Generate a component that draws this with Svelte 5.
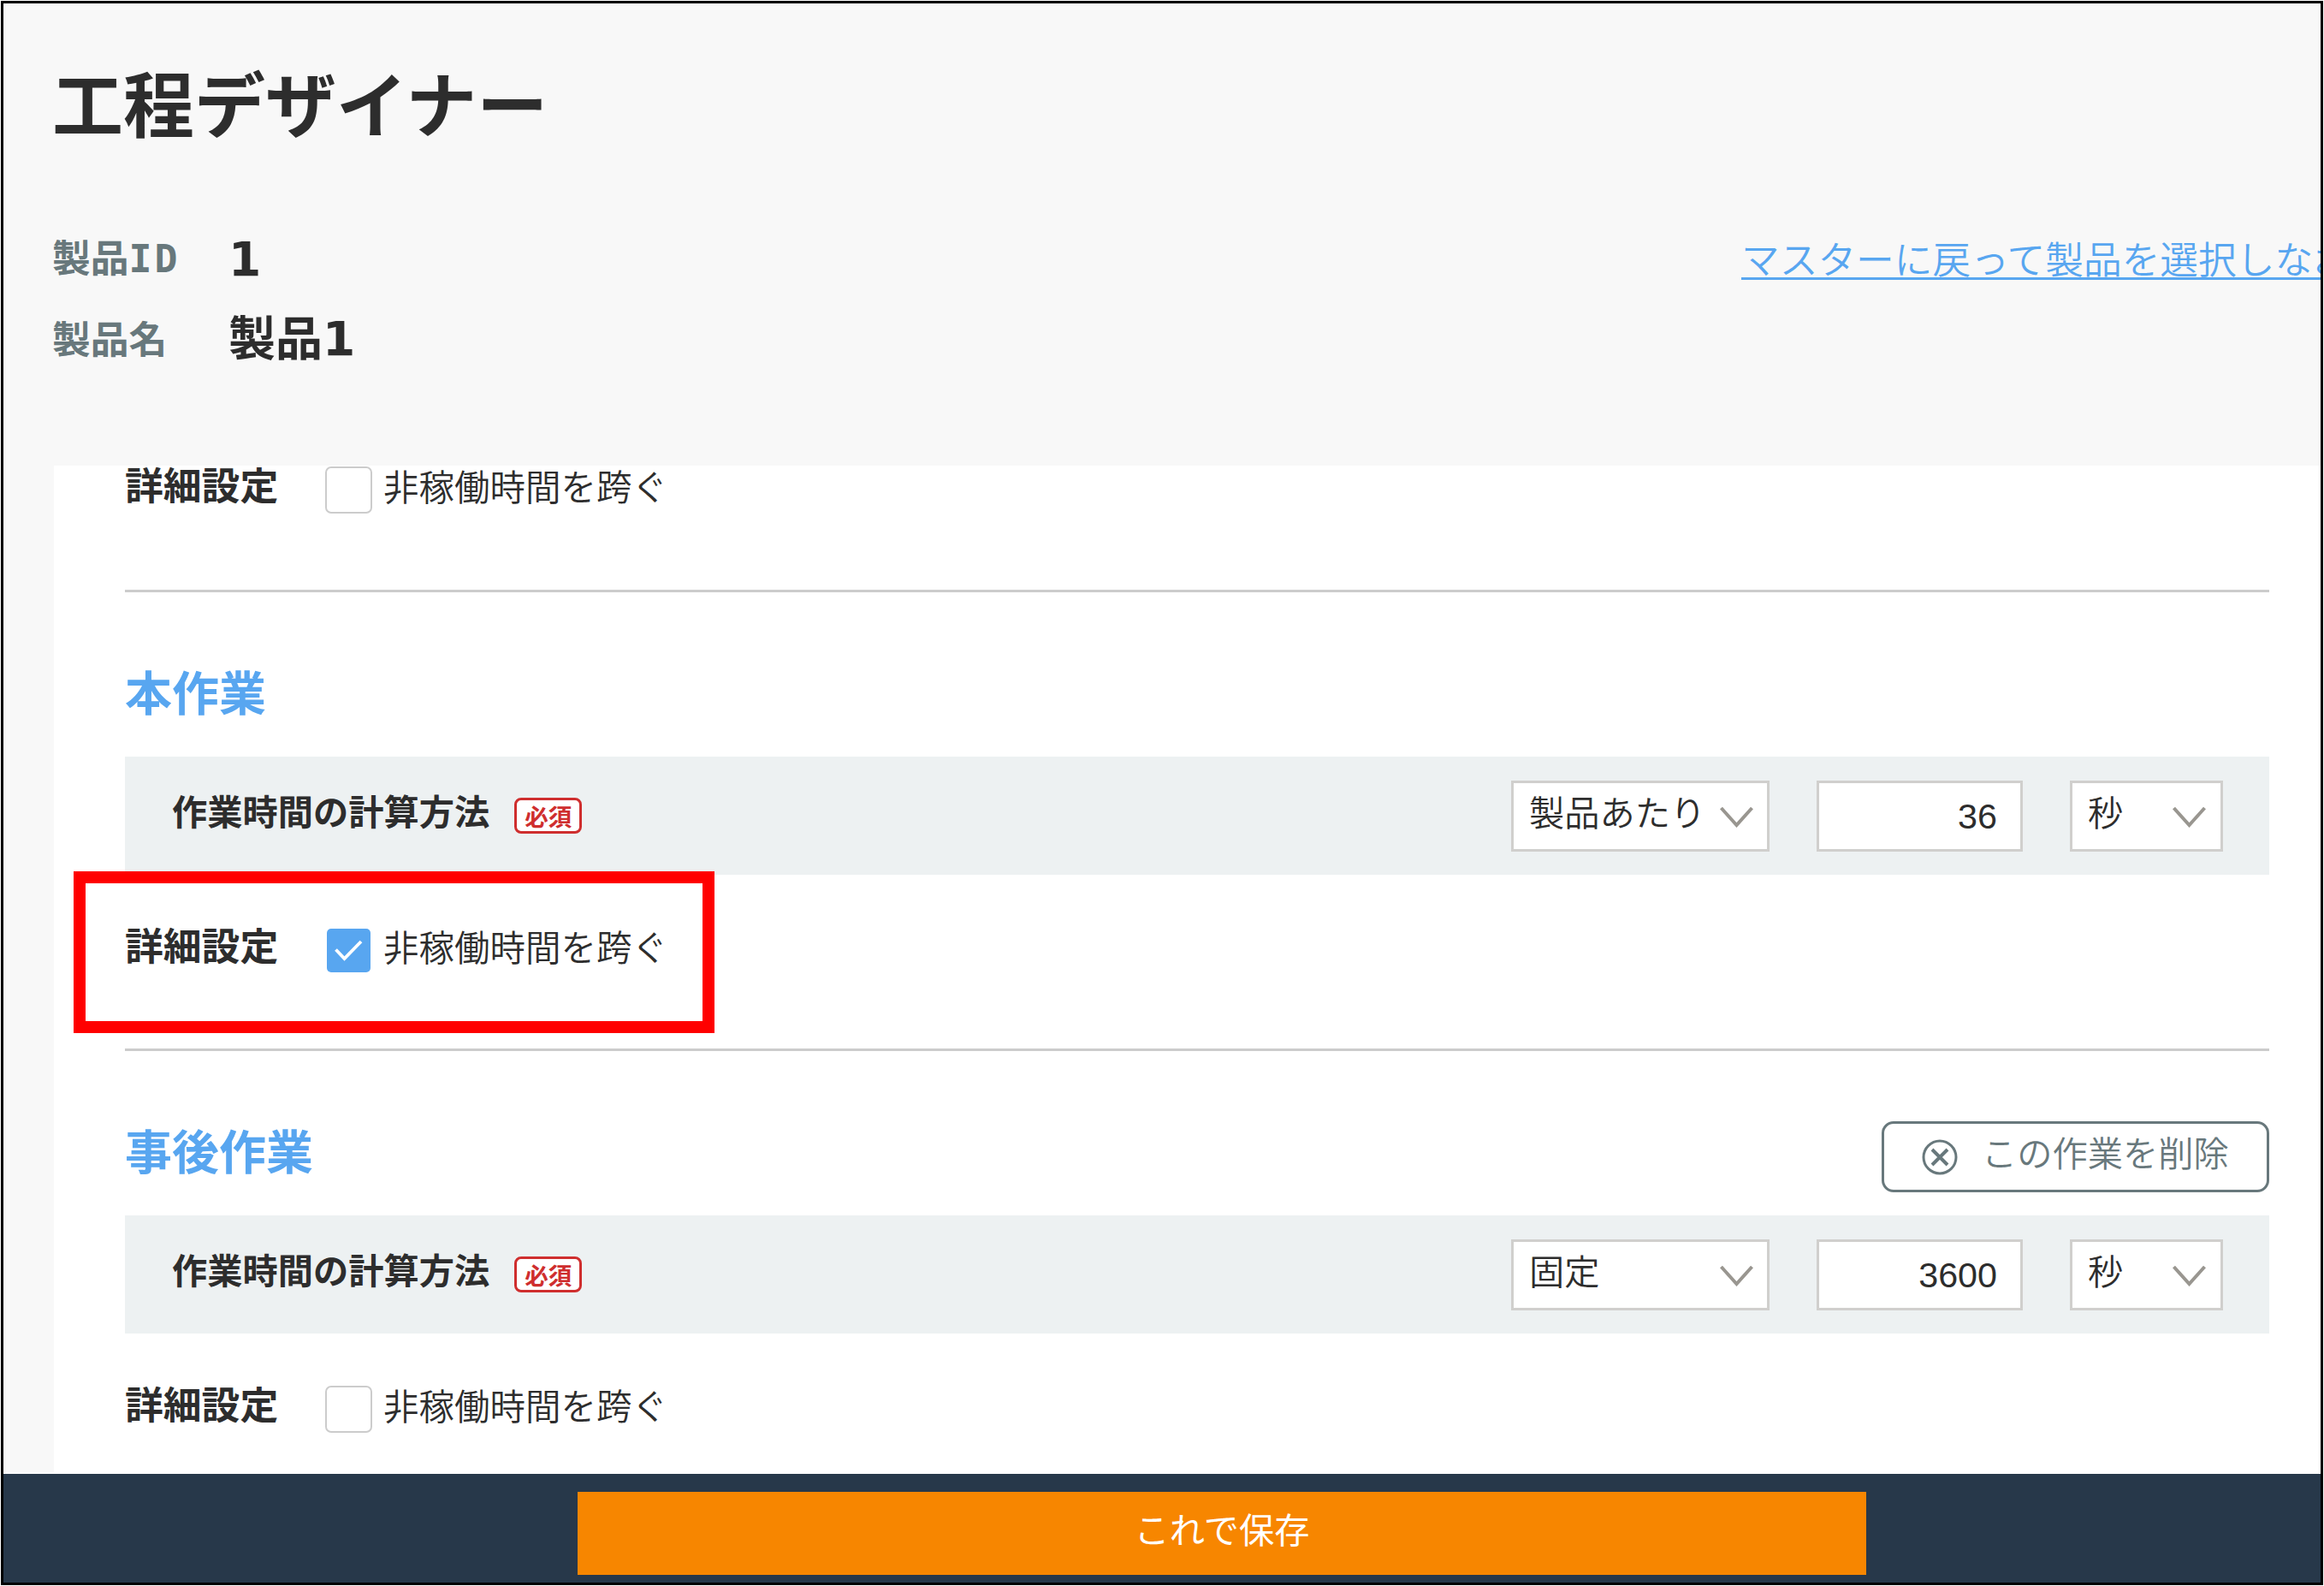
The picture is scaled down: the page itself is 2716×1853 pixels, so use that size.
<script>
	let tasks = $state([
		{ name: '本作業', method: '製品あたり', time: '36', unit: '秒', overIdle: true, marked: true, removable: false },
		{ name: '事後作業', method: '固定', time: '3600', unit: '秒', overIdle: false, marked: false, removable: true }
	]);
	let preOverIdle = $state(false);
</script>

{#snippet chevron()}
	<svg class="chevron" viewBox="0 0 39 26" fill="none" stroke="currentColor" stroke-width="4">
		<path d="M1.5 2 L19.5 22 L37.5 2"></path>
	</svg>
{/snippet}

{#snippet detail(checked, marked, toggle)}
	<div class="detail">
		<span class="detail-title">詳細設定</span>
		<button class="checkbox" class:checked aria-label="非稼働時間を跨ぐ" onclick={toggle}>
			{#if checked}
				<svg viewBox="0 0 51 51" fill="none" stroke="#fff" stroke-width="3.8">
					<path d="M10.5 24.5 L20.5 35 L40 15"></path>
				</svg>
			{/if}
		</button>
		<span class="detail-label">非稼働時間を跨ぐ</span>
		{#if marked}
			<div class="marker"></div>
		{/if}
	</div>
{/snippet}

<div class="frame">
	<header>
		<h1>工程デザイナー</h1>
		<div class="product">
			<dl>
				<div class="info">
					<dt>製品<span class="latin">ID</span></dt>
					<dd><span class="digit">1</span></dd>
				</div>
				<div class="info">
					<dt>製品名</dt>
					<dd>製品<span class="digit">1</span></dd>
				</div>
			</dl>
			<a class="back" href="#master">マスターに戻って製品を選択しなおす</a>
		</div>
	</header>

	<main>
		<div class="panel">
			<section>
				{@render detail(preOverIdle, false, () => (preOverIdle = !preOverIdle))}
			</section>
			{#each tasks as task}
				<section>
					<div class="section-head">
						<h2>{task.name}</h2>
						{#if task.removable}
							<button class="delete">
								<svg viewBox="0 0 42 42" fill="none" stroke="currentColor">
									<circle cx="21" cy="21" r="19" stroke-width="3"></circle>
									<path d="M12 12 L30 30 M30 12 L12 30" stroke-width="4"></path>
								</svg>
								<span>この作業を削除</span>
							</button>
						{/if}
					</div>
					<div class="calc">
						<span class="calc-title">作業時間の計算方法</span>
						<span class="required">必須</span>
						<div class="fields">
							<div class="field method">
								<span>{task.method}</span>
								{@render chevron()}
							</div>
							<div class="field time">{task.time}</div>
							<div class="field unit">
								<span>{task.unit}</span>
								{@render chevron()}
							</div>
						</div>
					</div>
					{@render detail(task.overIdle, task.marked, () => (task.overIdle = !task.overIdle))}
				</section>
			{/each}
		</div>
	</main>

	<footer>
		<button class="save">これで保存</button>
	</footer>
</div>

<style>
	:global(body) {
		margin: 0;
		background: #fff;
	}

	.frame {
		display: flex;
		flex-direction: column;
		box-sizing: border-box;
		width: 2714px;
		height: 1851px;
		margin: 1px;
		border: 3px solid #000;
		background: #f8f8f8;
		overflow: hidden;
		color: #2d2d2d;
		font-family: 'Noto Sans CJK JP', sans-serif;
		font-size: 41.25px;
	}

	button {
		padding: 0;
		font: inherit;
		cursor: pointer;
	}

	/* Header */
	header {
		flex: none;
		box-sizing: border-box;
		height: 540px;
		padding: 54px 0 0 57px;
	}

	h1 {
		margin: 0 0 76px;
		font-size: 83px;
		font-weight: 700;
		line-height: 120px;
	}

	.product {
		display: flex;
		justify-content: space-between;
	}

	dl {
		margin: 0;
	}

	.info {
		display: flex;
		align-items: center;
		height: 93px;
	}

	dt {
		width: 206px;
		color: #68787c;
		font-size: 44.8px;
		font-weight: 700;
		line-height: 92px;
	}

	dd {
		margin: 0;
		font-size: 55px;
		font-weight: 700;
		line-height: 90px;
	}

	.latin {
		font-family: 'DejaVu Sans Mono', monospace;
		letter-spacing: 3px;
	}

	.digit {
		font-family: 'DejaVu Sans', sans-serif;
	}

	.back {
		width: 677px;
		color: #58a6f0;
		font-size: 44.7px;
		font-weight: 350;
		line-height: 93px;
		white-space: nowrap;
		text-decoration-thickness: 3px;
		text-underline-offset: 4px;
		text-decoration-skip-ink: none;
	}

	main {
		flex: 1;
		min-height: 0;
		padding-left: 59px;
	}

	.panel {
		box-sizing: border-box;
		height: 100%;
		padding: 1px 60px 0 83px;
		background: #fff;
	}

	section {
		border-bottom: 3px solid #ccc;
	}

	.section-head {
		display: flex;
		justify-content: space-between;
		align-items: flex-start;
		height: 83px;
		padding: 82px 0 27px;
	}

	h2 {
		margin: 0;
		color: #58a6f0;
		font-size: 55px;
		font-weight: 700;
		line-height: 65px;
	}

	.delete {
		display: flex;
		align-items: center;
		gap: 28px;
		box-sizing: border-box;
		width: 453px;
		height: 83px;
		padding-left: 44px;
		border: 3px solid #68787c;
		border-radius: 14px;
		background: #fff;
		color: #68787c;
	}

	.delete svg {
		width: 42px;
		height: 42px;
	}

	.delete span {
		height: 64px;
		line-height: 50px;
		font-weight: 350;
		white-space: nowrap;
	}

	/* Calculation row */
	.calc {
		display: flex;
		align-items: center;
		box-sizing: border-box;
		height: 138px;
		padding: 0 54px 0 55px;
		background: #edf1f2;
	}

	.calc-title {
		font-weight: 700;
		line-height: 60px;
		padding-bottom: 14px;
	}

	.required {
		box-sizing: border-box;
		width: 79px;
		height: 42px;
		margin-left: 29px;
		border: 3px solid #cf2e2e;
		border-radius: 8px;
		background: #fff;
		color: #cf2e2e;
		font-size: 27.5px;
		font-weight: 700;
		line-height: 37px;
		text-align: center;
	}

	.fields {
		display: flex;
		gap: 55px;
		margin-left: auto;
	}

	.field {
		display: flex;
		align-items: center;
		justify-content: space-between;
		box-sizing: border-box;
		height: 83px;
		border: 3px solid #d0cfcd;
		background: #fff;
		font-weight: 350;
	}

	.field span {
		padding-bottom: 12px;
		line-height: 60px;
		white-space: nowrap;
	}

	.method {
		width: 302px;
		padding: 0 16px 0 18px;
	}

	.time {
		justify-content: flex-end;
		width: 241px;
		padding: 3px 27px 0 0;
		font-family: 'Liberation Sans', Arial, sans-serif;
	}

	.unit {
		width: 179px;
		padding: 0 17px 0 18px;
	}

	.chevron {
		flex: none;
		width: 39px;
		height: 26px;
		margin-top: 3px;
		color: #999690;
	}

	/* Detail row */
	.detail {
		position: relative;
		display: flex;
		align-items: flex-start;
		height: 55px;
		padding: 61px 0 87px;
	}

	section:first-child .detail {
		padding: 0 0 89px;
	}

	.detail-title {
		width: 234px;
		font-size: 44.8px;
		font-weight: 700;
		line-height: 40px;
	}

	.detail-label {
		margin-left: 13px;
		font-size: 41.5px;
		font-weight: 350;
		line-height: 45px;
	}

	.checkbox {
		display: flex;
		box-sizing: border-box;
		width: 55px;
		height: 55px;
		border: 2px solid #ccc;
		border-radius: 7px;
		background: #fff;
	}

	.checkbox.checked {
		width: 51px;
		height: 51px;
		margin: 2px;
		border: none;
		border-radius: 5px;
		background: #58a6f0;
	}

	.checkbox svg {
		width: 51px;
		height: 51px;
	}

	/* Highlight box over the detail row */
	.marker {
		position: absolute;
		top: -4px;
		left: -60px;
		box-sizing: border-box;
		width: 749px;
		height: 189px;
		border: 14px solid #f00;
	}

	/* Footer */
	footer {
		flex: none;
		display: flex;
		box-sizing: border-box;
		height: 129px;
		padding: 21px 0 0 671px;
		border-top: 2px solid #fff;
		background: #27384a;
	}

	.save {
		width: 1506px;
		height: 97px;
		padding: 0 0 13px;
		border: none;
		background: #f78600;
		color: #fff;
	}
</style>
